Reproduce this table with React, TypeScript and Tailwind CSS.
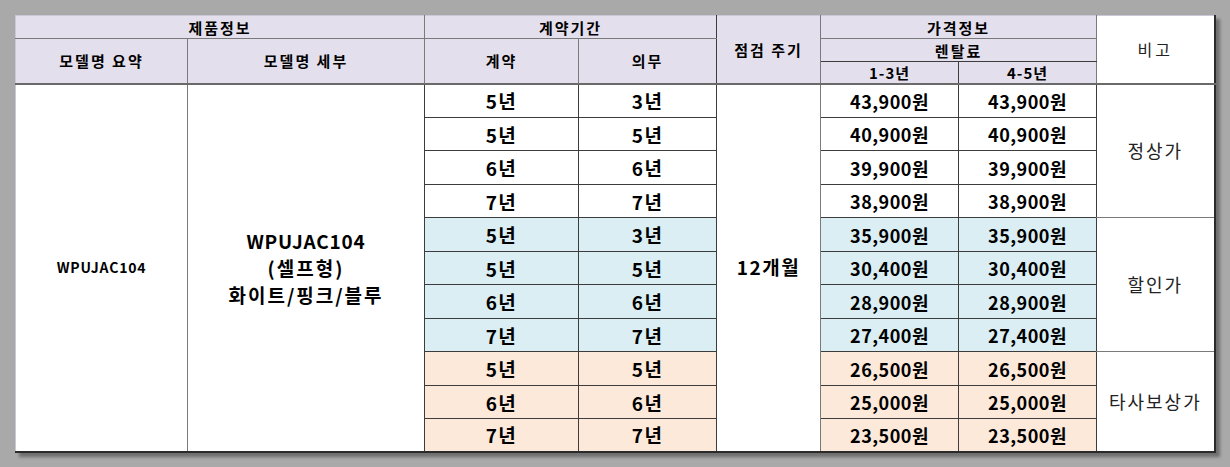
import React from "react";

const HB = "bg-[#e4dfec]";
const font = { fontFamily: '"Noto Sans CJK KR", "Noto Sans", sans-serif' };

type Row = { c: string; d: string; p: string; bg: string; h: string };
const rows: Row[] = [
  { c: "5년", d: "3년", p: "43,900원", bg: "bg-white", h: "h-[34px]" },
  { c: "5년", d: "5년", p: "40,900원", bg: "bg-white", h: "h-[33px]" },
  { c: "6년", d: "6년", p: "39,900원", bg: "bg-white", h: "h-[34px]" },
  { c: "7년", d: "7년", p: "38,900원", bg: "bg-white", h: "h-[33px]" },
  { c: "5년", d: "3년", p: "35,900원", bg: "bg-[#daeef3]", h: "h-[34px]" },
  { c: "5년", d: "5년", p: "30,400원", bg: "bg-[#daeef3]", h: "h-[33px]" },
  { c: "6년", d: "6년", p: "28,900원", bg: "bg-[#daeef3]", h: "h-[34px]" },
  { c: "7년", d: "7년", p: "27,400원", bg: "bg-[#daeef3]", h: "h-[33px]" },
  { c: "5년", d: "5년", p: "26,500원", bg: "bg-[#fde9d9]", h: "h-[34px]" },
  { c: "6년", d: "6년", p: "25,000원", bg: "bg-[#fde9d9]", h: "h-[33px]" },
  { c: "7년", d: "7년", p: "23,500원", bg: "bg-[#fde9d9]", h: "h-[33px]" },
];

const cellB = "border border-[#3c3c3c]";
const vText = "text-[18px] font-bold text-black text-center align-middle leading-none";
const yText = "text-[19px] font-bold text-black text-center align-middle leading-none tracking-[1.5px]";
const hText = "text-[15px] font-bold text-black leading-none tracking-[2px]";

export default function App() {
  return (
    <div className="w-[1230px] h-[467px] bg-[#a9a9a9] pt-[15px] pl-[15px]" style={font}>
      <table className="border-collapse table-fixed w-[1199px] bg-white shadow-[4px_4px_3px_rgba(0,0,0,0.35)] border-t border-l border-t-[#c8c8d6] border-l-[#c8c8d6] border-r-2 border-b-2 border-r-[#2a2a2a] border-b-[#2a2a2a]">
        <colgroup>
          <col className="w-[172px]" />
          <col className="w-[237px]" />
          <col className="w-[154px]" />
          <col className="w-[138px]" />
          <col className="w-[104px]" />
          <col className="w-[138px]" />
          <col className="w-[138px]" />
          <col className="w-[118px]" />
        </colgroup>
        <thead>
          <tr className="h-[23px]">
            <th colSpan={2} className={`${HB} border-b border-b-[#7a7a7a] border-r border-r-[#7a7a7a] ${hText}`}>제품정보</th>
            <th colSpan={2} className={`${HB} border-b border-b-[#7a7a7a] border-r border-r-[#3c3c3c] ${hText}`}>계약기간</th>
            <th rowSpan={3} className={`${HB} border-b-2 border-b-[#6a6a6a] border-r border-r-[#7a7a7a] ${hText}`}>점검 주기</th>
            <th colSpan={2} className={`${HB} border-b border-b-[#7a7a7a] border-r border-r-[#7a7a7a] ${hText}`}>가격정보</th>
            <th rowSpan={3} className="bg-white border-b-2 border-b-[#6a6a6a] text-[16px] font-normal text-[#222] leading-none tracking-[3px]">비고</th>
          </tr>
          <tr className="h-[23px]">
            <th rowSpan={2} className={`${HB} border-b-2 border-b-[#6a6a6a] border-r border-r-[#7a7a7a] ${hText}`}>모델명 요약</th>
            <th rowSpan={2} className={`${HB} border-b-2 border-b-[#6a6a6a] border-r border-r-[#7a7a7a] ${hText}`}>모델명 세부</th>
            <th rowSpan={2} className={`${HB} border-b-2 border-b-[#6a6a6a] border-r border-r-[#7a7a7a] ${hText}`}>계약</th>
            <th rowSpan={2} className={`${HB} border-b-2 border-b-[#6a6a6a] border-r border-r-[#3c3c3c] ${hText}`}>의무</th>
            <th colSpan={2} className={`${HB} border-b border-b-[#3c3c3c] border-r border-r-[#7a7a7a] ${hText}`}>렌탈료</th>
          </tr>
          <tr className="h-[22px]">
            <th className={`${HB} border-b-2 border-b-[#6a6a6a] border-r border-r-[#3c3c3c] text-[15px] font-bold text-black leading-none tracking-[1px]`}>1-3년</th>
            <th className={`${HB} border-b-2 border-b-[#6a6a6a] border-r border-r-[#7a7a7a] text-[15px] font-bold text-black leading-none tracking-[1px]`}>4-5년</th>
          </tr>
        </thead>
        <tbody>
          {rows.map((r, i) => (
            <tr key={i} className={r.h}>
              {i === 0 && (
                <>
                  <td rowSpan={11} className="bg-white border-r border-r-[#7a7a7a] text-[14px] font-bold text-black text-center align-middle tracking-[0.8px]">WPUJAC104</td>
                  <td rowSpan={11} className="bg-white border-r border-r-[#3c3c3c] text-[19px] font-bold text-black text-center align-middle leading-[27px]">
                    <div className="tracking-[0.8px]">WPUJAC104</div>
                    <div className="tracking-[2px]">(셀프형)</div>
                    <div className="tracking-[2px]">화이트/핑크/블루</div>
                  </td>
                </>
              )}
              <td className={`${r.bg} ${cellB} ${yText}`}>{r.c}</td>
              <td className={`${r.bg} ${cellB} ${yText}`}>{r.d}</td>
              {i === 0 && (
                <td rowSpan={11} className="bg-white border-r border-r-[#7a7a7a] text-[19px] font-bold text-black text-center align-middle tracking-[1.5px]">12개월</td>
              )}
              <td className={`${r.bg} ${cellB} ${vText} tracking-[0.5px]`}>{r.p}</td>
              <td className={`${r.bg} ${cellB} ${vText} tracking-[0.5px]`}>{r.p}</td>
              {i === 0 && (
                <td rowSpan={4} className="bg-white border-b border-b-[#7a7a7a] text-[18px] font-normal text-[#222] text-center align-middle tracking-[2px]">정상가</td>
              )}
              {i === 4 && (
                <td rowSpan={4} className="bg-white border-b border-b-[#7a7a7a] text-[18px] font-normal text-[#222] text-center align-middle tracking-[2px]">할인가</td>
              )}
              {i === 8 && (
                <td rowSpan={3} className="bg-white text-[18px] font-normal text-[#222] text-center align-middle tracking-[2px]">타사보상가</td>
              )}
            </tr>
          ))}
        </tbody>
      </table>
    </div>
  );
}
